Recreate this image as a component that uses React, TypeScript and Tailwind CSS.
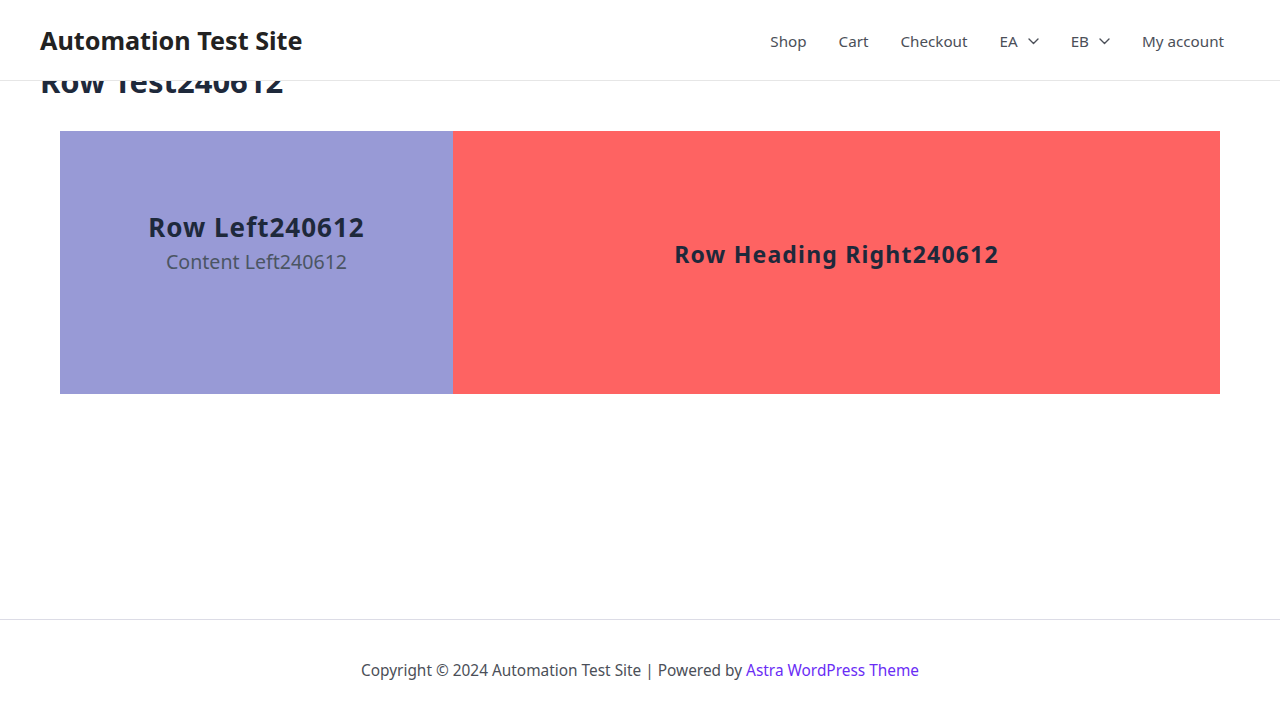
import React from "react";

function Chevron() {
  return (
    <svg width="11" height="7" viewBox="0 0 11 7" fill="none" className="ml-[10px] mt-[1px]">
      <polyline points="1,1 5.5,5.5 10,1" stroke="#4b4f58" strokeWidth="1.4" strokeLinecap="round" strokeLinejoin="round" />
    </svg>
  );
}

export default function App() {
  const font = { fontFamily: '"Noto Sans", "Open Sans", sans-serif' };
  return (
    <div className="relative min-h-[720px] flex flex-col bg-white" style={font}>
      <header className="absolute top-0 left-0 right-0 h-[81px] bg-white border-b border-[#e6e6e6] flex items-center justify-between pl-10 pr-10 z-10">
        <div className="text-[25.2px] font-bold text-[#222222] leading-none mt-[2px]">Automation Test Site</div>
        <nav className="flex items-center text-[15.2px] text-[#4b4f58] mt-[3px]">
          <a className="px-4">Shop</a>
          <a className="px-4">Cart</a>
          <a className="px-4">Checkout</a>
          <a className="px-4 flex items-center">EA<Chevron /></a>
          <a className="px-4 flex items-center">EB<Chevron /></a>
          <a className="px-4">My account</a>
        </nav>
      </header>

      <main className="px-10">
        <h1 className="pt-[63px] text-[31px] leading-[36px] font-bold text-[#1e293b]">Row Test240612</h1>
        <div className="mt-[32px] mx-5 flex h-[263px]">
          <div className="w-[393px] bg-[#989ad6] flex flex-col items-center pt-[80px]">
            <h2 className="text-[26px] leading-[32px] font-bold text-[#1e293b] tracking-[1px]">Row Left240612</h2>
            <p className="mt-[5px] text-[19.6px] leading-[28px] text-[#4b5563]">Content Left240612</p>
          </div>
          <div className="flex-1 bg-[#fe6362] flex items-center justify-center pb-[18px]">
            <h2 className="text-[23px] leading-[30px] font-bold text-[#1e293b] tracking-[1.2px]">Row Heading Right240612</h2>
          </div>
        </div>
      </main>

      <footer className="mt-auto h-[101px] border-t border-[#dcdce6] flex items-center justify-center pt-[2px] text-[15.4px] text-[#4b4f58]">
        <span>
          Copyright © 2024 Automation Test Site | Powered by <a className="text-[#6a2df5]">Astra WordPress Theme</a>
        </span>
      </footer>
    </div>
  );
}
